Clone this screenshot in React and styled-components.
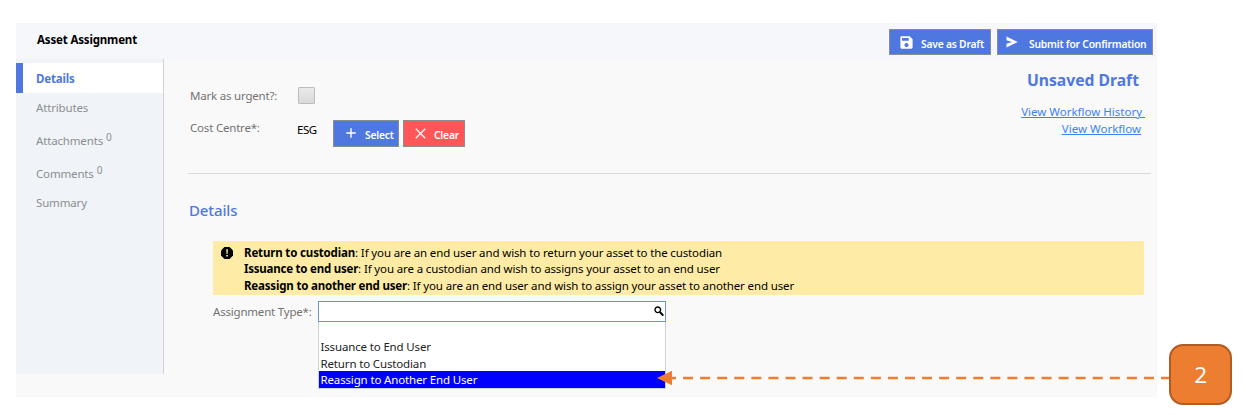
import React from "react";
import styled, { createGlobalStyle } from "styled-components";

const GlobalStyle = createGlobalStyle`
  * { box-sizing: border-box; }
  body {
    margin: 0;
    background: #fff;
    font: 11.5px/16px "Noto Sans", "Open Sans", sans-serif;
    letter-spacing: -0.16px;
    color: #000;
  }
`;

const Page = styled.div`
  position: relative;
  width: 1246px;
  height: 415px;
  padding: 23px 0 0 16px;
  overflow: hidden;
`;

const Panel = styled.main`
  width: 1141px;
  height: 374px;
  background: #f9f9f9;
`;

const Header = styled.header`
  display: flex;
  align-items: flex-start;
  justify-content: space-between;
  height: 36px;
  padding: 6px 4px 0 21px;
  background: #f6f7fb;
`;

const Title = styled.h1`
  margin: 3px 0 0;
  font-size: 11.5px;
  line-height: 16px;
  font-weight: 700;
`;

const Actions = styled.div`
  display: flex;
  gap: ${(p) => p.$gap}px;
`;

const Button = styled.button`
  display: flex;
  align-items: center;
  width: ${(p) => p.$width}px;
  height: ${(p) => p.$height || 26}px;
  padding: ${(p) => (p.$height ? 2 : 3)}px 0 0 ${(p) => p.$pad}px;
  gap: ${(p) => p.$gap}px;
  border: 1px solid #8b8d92;
  background: ${(p) => (p.$danger ? "#ff5757" : "#4e78e0")};
  color: #fff;
  font: 600 10.3px/16px "Noto Sans", sans-serif;
  letter-spacing: -0.21px;
  white-space: nowrap;
  svg { flex: none; margin-top: -3px; }
`;

const Body = styled.div`
  display: flex;
  align-items: flex-start;
`;

const Sidebar = styled.nav`
  width: 148px;
  height: 315px;
  padding-top: 4px;
  background: #f0f4f8;
  border-right: 1px solid #d0d1d3;
`;

const NavItem = styled.div`
  display: flex;
  align-items: center;
  height: ${(p) => p.$height || 30}px;
  padding-top: ${(p) => p.$top || 0}px;
  padding-left: ${(p) => (p.$active ? 13 : 20)}px;
  border-left: ${(p) => (p.$active ? "7px solid #4e78e0" : "0")};
  background: ${(p) => (p.$active ? "#fff" : "transparent")};
  color: ${(p) => (p.$active ? "#4e78e0" : "#8b8e91")};
  font-weight: ${(p) => (p.$active ? 700 : 400)};
`;

const Count = styled.sup`
  margin-left: 3px;
  font-size: 10px;
  line-height: 1;
  align-self: flex-start;
  margin-top: 7px;
`;

const Content = styled.section`
  width: 993px;
  padding: 0 6px 0 24px;
`;

const Summary = styled.div`
  display: flex;
  justify-content: space-between;
  height: 115px;
  border-bottom: 1px solid #d9d9d9;
`;

const Fields = styled.div`
  padding: 28px 0 0 2px;
`;

const Field = styled.div`
  display: flex;
  height: 33px;
`;

const Label = styled.label`
  width: ${(p) => p.$width}px;
  padding-top: ${(p) => p.$top || 0}px;
  color: #737373;
  letter-spacing: -0.2px;
  white-space: nowrap;
`;

const Checkbox = styled.span`
  width: 17px;
  height: 17px;
  border: 1px solid #bdbdbd;
  border-radius: 1px;
  background: linear-gradient(#e9e9e9, #dadada);
`;

const Value = styled.span`
  width: 36px;
  padding-top: 2px;
  letter-spacing: -0.5px;
`;

const Status = styled.div`
  display: flex;
  flex-direction: column;
  align-items: flex-end;
  padding: 10px 6px 0 0;
`;

const StatusTitle = styled.h2`
  margin: 0 6px 12px 0;
  font-size: 15.7px;
  line-height: 22px;
  font-weight: 700;
  letter-spacing: 0;
  color: #4e78e0;
`;

const Link = styled.a`
  margin-right: ${(p) => p.$inset || 0}px;
  color: #3c82f6;
  line-height: 17px;
  letter-spacing: 0;
  text-decoration: underline;
  white-space: pre;
`;

const SectionTitle = styled.h2`
  margin: 25px 0 20px 1px;
  font-size: 15px;
  line-height: 22px;
  font-weight: 500;
  letter-spacing: -0.12px;
  color: #4e78e0;
`;

const Notice = styled.div`
  display: flex;
  width: 931px;
  height: 54px;
  margin-left: 25px;
  padding: 4px 0 0 8px;
  gap: 11px;
  background: #feeca6;
  svg { flex: none; margin-top: 2px; }
`;

const NoticeLine = styled.p`
  margin: 0;
  line-height: 16.4px;
  letter-spacing: -0.13px;
  white-space: nowrap;
  b { letter-spacing: ${(p) => p.$spacing}px; }
`;

const TypeField = styled.div`
  display: flex;
  margin: 6px 0 0 25px;
`;

const Select = styled.div`
  width: 348px;
`;

const SelectInput = styled.div`
  display: flex;
  justify-content: flex-end;
  height: 21px;
  padding: 4px 1px 0 0;
  border: 1px solid #7393cf;
  background: #fff;
`;

const Options = styled.ul`
  margin: 0;
  padding: 0;
  list-style: none;
  border: 1px solid #cfd1d8;
  border-top: 0;
  background: #fff;
`;

const Option = styled.li`
  height: 16.4px;
  padding-left: 1.5px;
  line-height: 17px;
  letter-spacing: -0.15px;
  background: ${(p) => (p.$selected ? "#0000ff" : "#fff")};
  color: ${(p) => (p.$selected ? "#fff" : "#222")};
`;

const Arrow = styled.svg`
  position: absolute;
  left: 657px;
  top: 370px;
`;

const StepBadge = styled.div`
  position: absolute;
  left: 1169px;
  top: 344px;
  display: grid;
  place-items: center;
  width: 63px;
  height: 61px;
  border: 2.5px solid #b05c22;
  border-radius: 14px;
  background: #ed7d31;
  color: #fff;
  font-size: 22.5px;
  line-height: 30px;
`;

const SaveIcon = () => (
  <svg width="13" height="13" viewBox="0 0 13 13">
    <path fill="#fff" fillRule="evenodd" d="M1.5 0.3H9.7L12.6 3.2V11.3Q12.6 12.7 11.2 12.7H1.7Q.4 12.7.4 11.3V1.6Q.4.3 1.5.3ZM2 1.9V4.7H8.7V1.9ZM6.5 7A2.1 2.1 0 1 0 6.5 11.2A2.1 2.1 0 1 0 6.5 7Z" />
  </svg>
);

const SendIcon = () => (
  <svg width="12" height="12" viewBox="0 0 12 12">
    <path fill="#fff" d="M.5.4L11.7 6L.5 11.6V7.8L6 6L.5 4.2Z" />
  </svg>
);

const PlusIcon = () => (
  <svg width="10" height="10" viewBox="0 0 10 10">
    <path stroke="#fff" strokeWidth="1.4" d="M5 .3V9.7M.3 5H9.7" />
  </svg>
);

const CrossIcon = () => (
  <svg width="11" height="11" viewBox="0 0 11 11">
    <path stroke="#fff" strokeWidth="1.3" d="M.8.8L10.2 10.2M10.2.8L.8 10.2" />
  </svg>
);

const AlertIcon = () => (
  <svg width="12" height="12" viewBox="0 0 12 12">
    <path d="M3.4 0H8.6L12 3.4V8.6L8.6 12H3.4L0 8.6V3.4Z" />
    <path fill="#feeca6" d="M5.2 2.3H6.9L6.6 6.9H5.5ZM5.2 8H6.9V9.6H5.2Z" />
  </svg>
);

const SearchIcon = () => (
  <svg width="10" height="11" viewBox="0 0 10 11" fill="none" stroke="#000">
    <circle cx="3.8" cy="3.8" r="2.8" strokeWidth="1.4" />
    <path d="M5.9 6L9.3 9.6" strokeWidth="2" />
  </svg>
);

const notices = [
  ["Return to custodian", "If you are an end user and wish to return your asset to the custodian", -0.16],
  ["Issuance to end user", "If you are a custodian and wish to assigns your asset to an end user", -0.23],
  ["Reassign to another end user", "If you are an end user and wish to assign your asset to another end user", -0.18],
];

const options = ["", "Issuance to End User", "Return to Custodian", "Reassign to Another End User"];

export default function App() {
  return (
    <Page>
      <GlobalStyle />
      <Panel>
        <Header>
          <Title>Asset Assignment</Title>
          <Actions $gap={6}>
            <Button $width={102} $pad={10} $gap={8}><SaveIcon />Save as Draft</Button>
            <Button $width={156} $pad={8} $gap={11}><SendIcon />Submit for Confirmation</Button>
          </Actions>
        </Header>
        <Body>
          <Sidebar>
            <NavItem $active $top={1}>Details</NavItem>
            <NavItem>Attributes</NavItem>
            <NavItem $height={34} $top={2}>Attachments<Count>0</Count></NavItem>
            <NavItem $height={32} $top={1}>Comments<Count>0</Count></NavItem>
            <NavItem $height={28}>Summary</NavItem>
          </Sidebar>
          <Content>
            <Summary>
              <Fields>
                <Field>
                  <Label $width={108} $top={1}>Mark as urgent?:</Label>
                  <Checkbox />
                </Field>
                <Field>
                  <Label $width={107}>Cost Centre*:</Label>
                  <Value>ESG</Value>
                  <Actions $gap={4}>
                    <Button $width={66} $height={27} $pad={12} $gap={9}><PlusIcon />Select</Button>
                    <Button $width={62} $height={27} $pad={11} $gap={8} $danger><CrossIcon />Clear</Button>
                  </Actions>
                </Field>
              </Fields>
              <Status>
                <StatusTitle>Unsaved Draft</StatusTitle>
                <Link>{"View Workflow History "}</Link>
                <Link $inset={4}>View Workflow</Link>
              </Status>
            </Summary>
            <SectionTitle>Details</SectionTitle>
            <Notice>
              <AlertIcon />
              <div>
                {notices.map(([name, text, spacing]) => (
                  <NoticeLine key={name} $spacing={spacing}><b>{name}</b>: {text}</NoticeLine>
                ))}
              </div>
            </Notice>
            <TypeField>
              <Label $width={105} $top={3}>Assignment Type*:</Label>
              <Select>
                <SelectInput><SearchIcon /></SelectInput>
                <Options>
                  {options.map((name, i) => (
                    <Option key={name} $selected={i === 3}>{name}</Option>
                  ))}
                </Options>
              </Select>
            </TypeField>
          </Content>
        </Body>
      </Panel>
      <Arrow width="512" height="16" viewBox="0 0 512 16">
        <path d="M0 8L15 .8V15.2Z" fill="#ed7d31" />
        <path d="M9 8H512" stroke="#ed7d31" strokeWidth="2.4" strokeDasharray="10 7.07" />
      </Arrow>
      <StepBadge>2</StepBadge>
    </Page>
  );
}
